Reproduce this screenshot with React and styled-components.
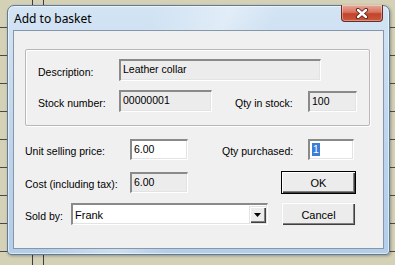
import React from 'react';
import styled, { createGlobalStyle } from 'styled-components';

const Global = createGlobalStyle`
html, body {
  margin: 0;
  padding: 0;
}
body {
  width: 395px;
  height: 265px;
  overflow: hidden;
  font-family: "Liberation Sans", Arial, sans-serif;
  background:
    linear-gradient(to right, transparent 32px, #3c3c3c 32px, #3c3c3c 33px, transparent 33px, transparent 43px, #3c3c3c 43px, #3c3c3c 44px, transparent 44px),
    repeating-linear-gradient(to bottom, transparent 0, transparent 27px, #4a4a44 27px, #4a4a44 28px),
    #d4d1b7;
}
`

const Desktop = styled.div`
  padding: 5px 0 0 7px;
`

const Window = styled.div`
  position: relative;
  width: 383px;
  height: 250px;
  box-sizing: border-box;
  border: 1px solid #5d7a96;
  border-radius: 7px 7px 4px 4px;
  background:
    linear-gradient(115deg, rgba(255,255,255,0) 30%, rgba(255,255,255,0.35) 45%, rgba(255,255,255,0) 55%),
    linear-gradient(to bottom, #d3e4f4, #bcd3eb 60%, #b4cde8);
  box-shadow: inset 0 0 0 1px rgba(255,255,255,0.55), 1px 1px 3px rgba(0,0,0,0.3);
  padding: 0 5px 5px 5px;
  display: flex;
  flex-direction: column;
`

const TitleBar = styled.div`
  height: 24px;
  display: flex;
  align-items: flex-start;
`

const Title = styled.div`
  font-family: "Noto Sans", "Open Sans", sans-serif;
  font-size: 12px;
  color: #000;
  padding: 4px 0 0 1px;
`

const CloseButton = styled.div`
  position: absolute;
  top: -1px;
  right: 6px;
  width: 42px;
  height: 17px;
  box-sizing: border-box;
  border: 1px solid #6b2b22;
  border-top: none;
  border-radius: 0 0 4px 4px;
  background: linear-gradient(to bottom, #e7a999 0%, #d7745f 45%, #c2432b 55%, #c85a3f 100%);
  box-shadow: inset 0 0 0 1px rgba(255,255,255,0.35);
  display: flex;
  align-items: center;
  justify-content: center;
`

const Client = styled.div`
  flex: 1;
  background: #f0f0f0;
  border: 1px solid #8497ab;
  display: flex;
  flex-direction: column;
`

const GroupBox = styled.div`
  margin: 18px 0 0 11px;
  width: 345px;
  height: 77px;
  box-sizing: border-box;
  border: 1px solid #b8b8b8;
  border-radius: 2px;
  box-shadow: 1px 1px 0 #fff, inset 1px 1px 0 #fff;
  padding: 9px 0 0 12px;
  display: flex;
  flex-direction: column;
  gap: 9px;
`

const Row = styled.div`
  display: flex;
  align-items: center;
  margin-top: ${p => p.$top || 0}px;
`

const Label = styled.div`
  width: ${p => p.$w}px;
  margin-left: ${p => p.$ml || 0}px;
  padding-top: 3px;
  font-size: 10.5px;
  color: #000;
  white-space: nowrap;
  flex: 0 0 auto;
`

const Field = styled.div`
  width: ${p => p.$w}px;
  height: ${p => p.$h || 21}px;
  box-sizing: border-box;
  flex: 0 0 auto;
  background: ${p => (p.$white ? '#fff' : '#ececec')};
  border-top: 2px solid #8a8a8a;
  border-left: 2px solid #8a8a8a;
  border-bottom: 1px solid #fff;
  border-right: 1px solid #fff;
  box-shadow: 0 0 0 0 transparent, inset -1px -1px 0 #e3e3e3;
  font-size: 10.5px;
  color: #000;
  padding: 2px 0 0 2px;
  display: flex;
  align-items: flex-start;
  white-space: nowrap;
`

const Selected = styled.span`
  background: #3a7ed8;
  color: #fff;
  padding: 0 1px;
  line-height: 13px;
`

const Lower = styled.div`
  margin: 13px 0 0 11px;
  display: flex;
  flex-direction: column;
`

const Button = styled.div`
  width: 75px;
  height: ${p => p.$h}px;
  margin-left: ${p => p.$ml}px;
  box-sizing: border-box;
  flex: 0 0 auto;
  background: #ececec;
  border: 1px solid ${p => (p.$default ? '#000' : 'transparent')};
  box-shadow: inset 1px 1px 0 #fff, inset -1px -1px 0 #404040, inset -2px -2px 0 #808080;
  font-size: 11px;
  color: #000;
  display: flex;
  align-items: center;
  justify-content: center;
  padding-top: 1px;
`

const Combo = styled(Field)`
  padding: 0 1px 0 2px;
  align-items: center;
  justify-content: space-between;
  font-size: 11px;
`

const DropButton = styled.div`
  width: 17px;
  height: 17px;
  box-sizing: border-box;
  background: #ececec;
  box-shadow: inset 1px 1px 0 #e3e3e3, inset 2px 2px 0 #fff, inset -1px -1px 0 #404040, inset -2px -2px 0 #808080;
  display: flex;
  align-items: center;
  justify-content: center;
`

const App = () => (
  <Desktop>
    <Global />
    <Window>
      <TitleBar>
        <Title>Add to basket</Title>
        <CloseButton>
          <svg width="14" height="11" viewBox="0 0 14 11">
            <path d="M3 2 L11 9 M11 2 L3 9" stroke="#5a1e16" strokeWidth="4.2" strokeLinecap="round" />
            <path d="M3 2 L11 9 M11 2 L3 9" stroke="#fff" strokeWidth="2.4" strokeLinecap="round" />
          </svg>
        </CloseButton>
      </TitleBar>
      <Client>
        <GroupBox>
          <Row>
            <Label $w={81}>Description:</Label>
            <Field $w={202} $h={22}>Leather collar</Field>
          </Row>
          <Row>
            <Label $w={81}>Stock number:</Label>
            <Field $w={93} $h={22}>00000001</Field>
            <Label $w={73} $ml={23}>Qty in stock:</Label>
            <Field $w={49} $h={21}>100</Field>
          </Row>
        </GroupBox>
        <Lower>
          <Row>
            <Label $w={105}>Unit selling price:</Label>
            <Field $w={58} $white>6.00</Field>
            <Label $w={86} $ml={34}>Qty purchased:</Label>
            <Field $w={46} $white><Selected>1</Selected></Field>
          </Row>
          <Row $top={11}>
            <Label $w={105}>Cost (including tax):</Label>
            <Field $w={58}>6.00</Field>
            <Button $ml={93} $h={23} $default>OK</Button>
          </Row>
          <Row $top={8}>
            <Label $w={46}>Sold by:</Label>
            <Combo $w={197} $h={22} $white>
              <span>Frank</span>
              <DropButton>
                <svg width="7" height="4" viewBox="0 0 7 4">
                  <path d="M0 0 H7 L3.5 4 Z" fill="#000" />
                </svg>
              </DropButton>
            </Combo>
            <Button $ml={13} $h={24}>Cancel</Button>
          </Row>
        </Lower>
      </Client>
    </Window>
  </Desktop>
);

export default App;
